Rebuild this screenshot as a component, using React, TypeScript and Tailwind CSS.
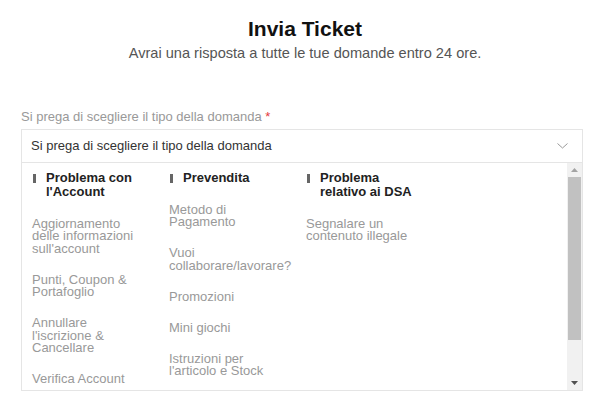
import React from 'react';

type Column = {
  title: string;
  items: string[];
};

const columns: Column[] = [
  {
    title: "Problema con l'Account",
    items: [
      "Aggiornamento delle informazioni sull'account",
      'Punti, Coupon & Portafoglio',
      "Annullare l'iscrizione & Cancellare",
      'Verifica Account',
    ],
  },
  {
    title: 'Prevendita',
    items: [
      'Metodo di Pagamento',
      'Vuoi collaborare/lavorare?',
      'Promozioni',
      'Mini giochi',
      "Istruzioni per l'articolo e Stock",
    ],
  },
  {
    title: 'Problema relativo ai DSA',
    items: ['Segnalare un contenuto illegale'],
  },
];

const Scrollbar = () => (
  <div className="ml-auto w-[15px] h-full bg-[#f1f1f1] flex flex-col shrink-0">
    <div className="h-[14px] flex items-center justify-center">
      <svg width="7" height="4" viewBox="0 0 7 4">
        <polygon points="0,4 7,4 3.5,0" fill="#a3a3a3" />
      </svg>
    </div>
    <div className="mx-[1px] h-[163px] bg-[#c1c1c1]" />
    <div className="flex-1" />
    <div className="h-[15px] flex items-center justify-center">
      <svg width="7" height="4" viewBox="0 0 7 4">
        <polygon points="0,0 7,0 3.5,4" fill="#505050" />
      </svg>
    </div>
  </div>
);

export default function App() {
  return (
    <div className="w-[610px] h-[406px] bg-white overflow-hidden font-['Liberation_Sans',Arial,sans-serif]">
      <div className="pt-[17px] text-center">
        <h1 className="text-[21px] leading-[24px] font-bold text-[#111]">Invia Ticket</h1>
        <p className="mt-[3px] text-[14.6px] leading-[18px] text-[#555]">
          Avrai una risposta a tutte le tue domande entro 24 ore.
        </p>
      </div>

      <div className="ml-[21px] w-[562px] mt-[47px]">
        <label className="block text-[13px] leading-[15px] text-[#999]">
          Si prega di scegliere il tipo della domanda <span className="text-[#e4393c]">*</span>
        </label>

        <div className="mt-[5px] h-[34px] border border-[#e5e5e5] flex items-center justify-between pl-[9px] pr-[14px]">
          <span className="text-[13px] text-[#333]">Si prega di scegliere il tipo della domanda</span>
          <svg width="11" height="6" viewBox="0 0 11 6" fill="none">
            <polyline points="0.5,0.5 5.5,5 10.5,0.5" stroke="#999" strokeWidth="1" />
          </svg>
        </div>

        <div className="h-[228px] border-x border-b border-[#e5e5e5] flex">
          <div className="flex pl-[10px] pt-[8px] overflow-hidden">
            {columns.map((col) => (
              <div key={col.title} className="w-[137px] pr-[25px]">
                <div className="flex">
                  <div className="w-[3px] h-[9px] bg-[#666] mt-[3px] ml-[1px] mr-[10px] shrink-0" />
                  <h3 className="text-[13px] leading-[14px] font-bold text-[#222]">{col.title}</h3>
                </div>
                {col.items.map((item) => (
                  <p key={item} className="mt-[18.5px] text-[13px] leading-[12.5px] text-[#999]">
                    {item}
                  </p>
                ))}
              </div>
            ))}
          </div>
          <Scrollbar />
        </div>
      </div>
    </div>
  );
}
